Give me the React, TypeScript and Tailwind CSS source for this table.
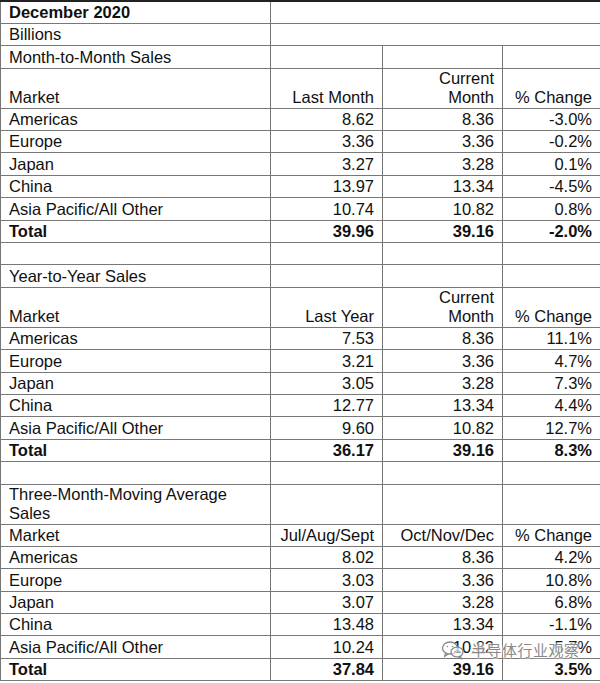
import React from "react";

type Row =
  | { kind: "title"; text: string; bold?: boolean }
  | { kind: "section"; text: string; tall?: boolean }
  | { kind: "blank" }
  | { kind: "header"; a: string; b: string; c: string; d: string; tall?: boolean }
  | { kind: "data"; a: string; b: string; c: string; d: string; bold?: boolean };

const rows: Row[] = [
  { kind: "title", text: "December 2020", bold: true },
  { kind: "title", text: "Billions" },
  { kind: "section", text: "Month-to-Month Sales" },
  { kind: "header", a: "Market", b: "Last Month", c: "Current Month", d: "% Change", tall: true },
  { kind: "data", a: "Americas", b: "8.62", c: "8.36", d: "-3.0%" },
  { kind: "data", a: "Europe", b: "3.36", c: "3.36", d: "-0.2%" },
  { kind: "data", a: "Japan", b: "3.27", c: "3.28", d: "0.1%" },
  { kind: "data", a: "China", b: "13.97", c: "13.34", d: "-4.5%" },
  { kind: "data", a: "Asia Pacific/All Other", b: "10.74", c: "10.82", d: "0.8%" },
  { kind: "data", a: "Total", b: "39.96", c: "39.16", d: "-2.0%", bold: true },
  { kind: "blank" },
  { kind: "section", text: "Year-to-Year Sales" },
  { kind: "header", a: "Market", b: "Last Year", c: "Current Month", d: "% Change", tall: true },
  { kind: "data", a: "Americas", b: "7.53", c: "8.36", d: "11.1%" },
  { kind: "data", a: "Europe", b: "3.21", c: "3.36", d: "4.7%" },
  { kind: "data", a: "Japan", b: "3.05", c: "3.28", d: "7.3%" },
  { kind: "data", a: "China", b: "12.77", c: "13.34", d: "4.4%" },
  { kind: "data", a: "Asia Pacific/All Other", b: "9.60", c: "10.82", d: "12.7%" },
  { kind: "data", a: "Total", b: "36.17", c: "39.16", d: "8.3%", bold: true },
  { kind: "blank" },
  { kind: "section", text: "Three-Month-Moving Average Sales", tall: true },
  { kind: "header", a: "Market", b: "Jul/Aug/Sept", c: "Oct/Nov/Dec", d: "% Change" },
  { kind: "data", a: "Americas", b: "8.02", c: "8.36", d: "4.2%" },
  { kind: "data", a: "Europe", b: "3.03", c: "3.36", d: "10.8%" },
  { kind: "data", a: "Japan", b: "3.07", c: "3.28", d: "6.8%" },
  { kind: "data", a: "China", b: "13.48", c: "13.34", d: "-1.1%" },
  { kind: "data", a: "Asia Pacific/All Other", b: "10.24", c: "10.82", d: "5.7%" },
  { kind: "data", a: "Total", b: "37.84", c: "39.16", d: "3.5%", bold: true },
];

const cell = "border border-[#777] align-bottom px-[8px] pb-[1px] pt-0 leading-[19px]";
const left = cell + " text-left";
const right = cell + " text-right";

function WeChatIcon() {
  return (
    <svg width="24" height="20" viewBox="0 0 24 20" fill="none" stroke="#8a8a8a" strokeWidth="1.3">
      <ellipse cx="9" cy="8" rx="7.5" ry="6" fill="rgba(255,255,255,0.6)" />
      <path d="M4.5 13.2 L3.8 16.2 L7.2 13.9" />
      <ellipse cx="16" cy="12" rx="6" ry="4.8" fill="rgba(255,255,255,0.6)" />
      <path d="M19.5 16 L20.2 18.6 L17.4 16.7" />
      <circle cx="6.3" cy="6.5" r="0.8" fill="#8a8a8a" stroke="none" />
      <circle cx="11.5" cy="6.5" r="0.8" fill="#8a8a8a" stroke="none" />
      <circle cx="14" cy="11.2" r="0.6" fill="#8a8a8a" stroke="none" />
      <circle cx="18" cy="11.2" r="0.6" fill="#8a8a8a" stroke="none" />
    </svg>
  );
}

export default function App() {
  return (
    <div
      className="relative w-[600px] h-[683px] bg-white text-[#111] text-[16.5px] overflow-hidden"
      style={{ fontFamily: '"Liberation Sans", Arial, Helvetica, sans-serif' }}
    >
      <table className="w-[600px] border-collapse table-fixed border-t-2 border-t-[#222]">
        <colgroup>
          <col className="w-[270px]" />
          <col className="w-[112px]" />
          <col className="w-[120px]" />
          <col className="w-[98px]" />
        </colgroup>
        <tbody>
          {rows.map((r, i) => {
            if (r.kind === "title") {
              return (
                <tr key={i} className="h-[22.4px]">
                  <td className={left + (r.bold ? " font-bold" : "")}>{r.text}</td>
                  <td className={cell} colSpan={3}></td>
                </tr>
              );
            }
            if (r.kind === "section") {
              return (
                <tr key={i} className={r.tall ? "h-[39px]" : "h-[22.4px]"}>
                  <td className={left}>{r.text}</td>
                  <td className={cell}></td>
                  <td className={cell}></td>
                  <td className={cell}></td>
                </tr>
              );
            }
            if (r.kind === "blank") {
              return (
                <tr key={i} className="h-[22.4px]">
                  <td className={cell}></td>
                  <td className={cell}></td>
                  <td className={cell}></td>
                  <td className={cell}></td>
                </tr>
              );
            }
            if (r.kind === "header") {
              return (
                <tr key={i} className={r.tall ? "h-[39.5px]" : "h-[22.4px]"}>
                  <td className={left}>{r.a}</td>
                  <td className={right + " whitespace-nowrap"}>{r.b}</td>
                  <td className={right}>{r.c}</td>
                  <td className={right + " whitespace-nowrap"}>{r.d}</td>
                </tr>
              );
            }
            const b = r.bold ? " font-bold" : "";
            return (
              <tr key={i} className="h-[22.4px]">
                <td className={left + b}>{r.a}</td>
                <td className={right + b}>{r.b}</td>
                <td className={right + b}>{r.c}</td>
                <td className={right + b}>{r.d}</td>
              </tr>
            );
          })}
        </tbody>
      </table>

      <div className="absolute left-[441px] top-[640px] flex items-center gap-[6px] pointer-events-none">
        <WeChatIcon />
        <span
          className="text-[15px] leading-[18px] text-[#8a8a8a] tracking-[0.5px]"
          style={{
            fontFamily: '"Noto Sans CJK SC", sans-serif',
            textShadow: "0 0 2px #fff, 0 0 2px #fff, 0 0 3px #fff",
          }}
        >
          半导体行业观察
        </span>
      </div>
    </div>
  );
}
